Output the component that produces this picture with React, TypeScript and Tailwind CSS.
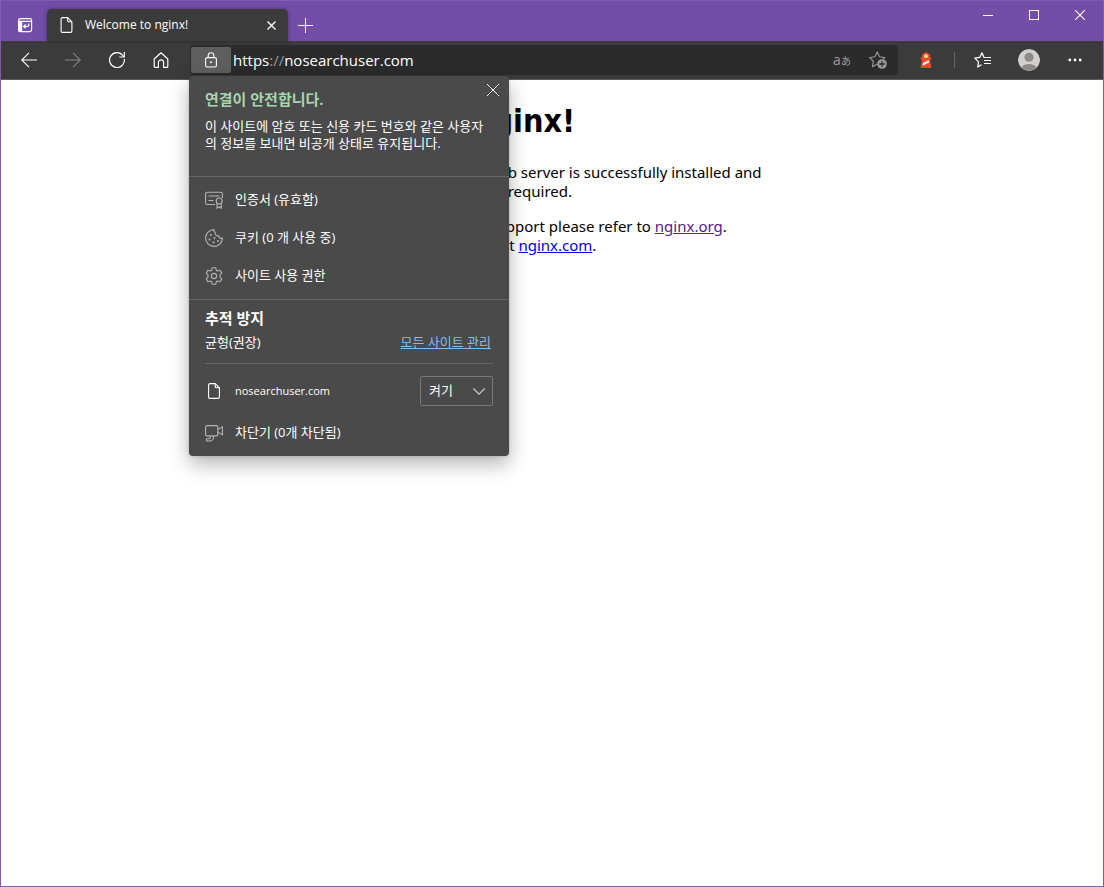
import type { ReactNode } from "react";

function BackIcon({ className = "" }: { className?: string }) {
  return (
    <svg className={`w-4 h-4 ${className}`} viewBox="0 0 16 16" fill="none" stroke="currentColor" strokeWidth="1.1">
      <path d="M16 8H.8M8 .8.8 8 8 15.2" />
    </svg>
  );
}

function PageIcon({ className = "" }: { className?: string }) {
  return (
    <svg className={className} viewBox="0 0 12 16" fill="none" stroke="currentColor" strokeWidth="1.1" strokeLinejoin="round">
      <path d="M2 .6h5.2l4.2 4.2V14a1.4 1.4 0 0 1-1.4 1.4H2A1.4 1.4 0 0 1 .6 14V2A1.4 1.4 0 0 1 2 .6Z" />
      <path d="M7.2.6v3.2a1 1 0 0 0 1 1h3.2" />
    </svg>
  );
}

function NavButton({ label, children }: { label: string; children: ReactNode }) {
  return (
    <button aria-label={label} className="w-11 h-[30px] flex items-center justify-center shrink-0">
      {children}
    </button>
  );
}

function MenuRow({ icon, label }: { icon: ReactNode; label: string }) {
  return (
    <button className="w-full h-[38px] flex items-center gap-3 text-left">
      {icon}
      <span>{label}</span>
    </button>
  );
}

function TitleBar() {
  return (
    <div className="h-10 flex bg-[#744da9]">
      <button aria-label="Tab actions" className="w-[46px] flex items-center justify-center pt-2 pl-[2px]">
        <svg className="w-4 h-4" viewBox="0 0 16 16" fill="none" stroke="currentColor" strokeWidth="1.2">
          <rect x="1.6" y="1.6" width="13" height="13" rx="1.8" />
          <path d="M1.6 4.4h13" />
          <path d="M1.6 4.4h3v10h-2a1 1 0 0 1-1-1Z" fill="currentColor" />
          <path d="M11.8 6.6v1.6q0 1.2-1.2 1.2H6.8M8.6 7.4l-2 2 2 2" />
        </svg>
      </button>
      <div className="w-[241px] h-8 self-end flex items-center bg-[#3b3b3b] rounded-t-[5px] pl-[13px] pr-2 shadow-[0_0_4px_rgba(0,0,0,0.35)]">
        <PageIcon className="w-[13px] h-4" />
        <span className="ml-3 flex-1 text-[12px] whitespace-nowrap">Welcome to nginx!</span>
        <button aria-label="Close tab" className="w-[18px] h-[18px] flex items-center justify-center">
          <svg className="w-[9px] h-[9px]" viewBox="0 0 9 9" stroke="currentColor" strokeWidth="1.3">
            <path d="M.5.5l8 8M8.5.5l-8 8" />
          </svg>
        </button>
      </div>
      <button aria-label="New tab" className="w-[35px] flex items-center justify-center pt-2">
        <svg className="w-[15px] h-[15px]" viewBox="0 0 15 15" stroke="currentColor">
          <path d="M7.5 0v15M0 7.5h15" />
        </svg>
      </button>
      <div className="ml-auto h-7 flex">
        <button aria-label="Minimize" className="w-[46px] flex items-center justify-center">
          <svg className="w-[10px] h-[10px]" viewBox="0 0 10 10" stroke="currentColor">
            <path d="M0 5.5h10" />
          </svg>
        </button>
        <button aria-label="Maximize" className="w-[46px] flex items-center justify-center">
          <svg className="w-[10px] h-[10px]" viewBox="0 0 10 10" fill="none" stroke="currentColor">
            <rect x=".5" y=".5" width="9" height="9" />
          </svg>
        </button>
        <button aria-label="Close" className="w-[46px] flex items-center justify-center">
          <svg className="w-[10px] h-[10px]" viewBox="0 0 10 10" stroke="currentColor" strokeWidth="1.1">
            <path d="M0 0l10 10M10 0L0 10" />
          </svg>
        </button>
      </div>
    </div>
  );
}

function SiteInfo() {
  return (
    <div
      role="dialog"
      aria-labelledby="site-info-title"
      className="absolute -left-px top-[31px] z-10 w-80 rounded-[4px] bg-[#4a4a4a] text-[13px] text-white shadow-[0_8px_20px_rgba(0,0,0,0.3),0_0_3px_rgba(0,0,0,0.2)]"
    >
      <div className="pt-3 px-4 pb-6 border-b border-[#666]">
        <h2 id="site-info-title" className="text-[15px] leading-[22px] font-bold text-[#a5d6b0]">
          연결이 안전합니다.
        </h2>
        <p className="mt-2 leading-[17px]">
          이 사이트에 암호 또는 신용 카드 번호와 같은 사용자의 정보를 보내면 비공개 상태로 유지됩니다.
        </p>
        <button aria-label="닫기" className="absolute right-2 top-1 w-4 h-5 flex items-center justify-center">
          <svg className="w-3 h-3 shrink-0" viewBox="0 0 12 12" stroke="currentColor">
            <path d="M0 0l12 12M12 0L0 12" />
          </svg>
        </button>
      </div>

      <div className="py-1 px-4 border-b border-[#666]">
        <MenuRow
          label="인증서 (유효함)"
          icon={
            <svg className="w-[18px] h-[18px] text-[#b5b5b5]" viewBox="0 0 18 18" fill="none" stroke="currentColor" strokeWidth="1.1">
              <path d="M10 13.5H2.4A1.8 1.8 0 0 1 .6 11.7V3A1.8 1.8 0 0 1 2.4 1.2h13.2A1.8 1.8 0 0 1 17.4 3v4" />
              <path d="M3.5 5h11M3.5 9.5h5" />
              <circle cx="14.2" cy="10" r="3" />
              <path d="M12 12.3v4.9l2.2-1.5 2.2 1.5v-4.9" />
            </svg>
          }
        />
        <MenuRow
          label="쿠키 (0 개 사용 중)"
          icon={
            <svg className="w-[18px] h-[18px] text-[#b5b5b5]" viewBox="0 0 18 18" fill="none" stroke="currentColor" strokeWidth="1.1">
              <path d="M9 .6a8.4 8.4 0 1 0 8.4 8.6 2.7 2.7 0 0 1-3.7-2.3 3 3 0 0 1-3.6-3.5A2.8 2.8 0 0 1 9 .6Z" />
              <g fill="currentColor" stroke="none">
                <circle cx="6" cy="6" r="1" />
                <circle cx="4.5" cy="10.5" r="1" />
                <circle cx="9.5" cy="9" r="1" />
                <circle cx="8.5" cy="13.5" r="1" />
                <circle cx="13" cy="12" r="1" />
              </g>
            </svg>
          }
        />
        <MenuRow
          label="사이트 사용 권한"
          icon={
            <svg className="w-[18px] h-[18px] text-[#b5b5b5]" viewBox="0 0 18 18" fill="none" stroke="currentColor" strokeWidth="1.1" strokeLinejoin="round">
              <path d="M7.3.7h3.4l.6 2.5 1.3.8 2.5-.8 1.7 2.9L15 7.9v2.2l1.8 1.8-1.7 2.9-2.5-.8-1.3.8-.6 2.5H7.3l-.6-2.5-1.3-.8-2.5.8-1.7-2.9L3 10.1V7.9L1.2 6.1l1.7-2.9 2.5.8 1.3-.8Z" />
              <circle cx="9" cy="9" r="2.6" />
            </svg>
          }
        />
      </div>

      <div className="pt-2 px-4 pb-1">
        <h3 className="text-[15px] leading-5 font-bold">추적 방지</h3>
        <div className="mt-1 mb-[11px] flex justify-between leading-5">
          <span>균형(권장)</span>
          <a href="#sites" className="mr-[2px] text-[#80bdf0] underline">
            모든 사이트 관리
          </a>
        </div>
        <div className="pt-3 flex items-center border-t border-[#666]">
          <PageIcon className="w-3 h-4 mx-[3px]" />
          <label htmlFor="tracking" className="ml-3 flex-1 text-[11px]">
            nosearchuser.com
          </label>
          <div className="relative">
            <select
              id="tracking"
              className="block w-[73px] h-[30px] pl-2 appearance-none rounded-[2px] border border-[#777] bg-transparent text-[13px]"
            >
              <option>켜기</option>
            </select>
            <svg
              className="absolute right-2 top-3 w-3 h-[7px] pointer-events-none text-[#d0d0d0]"
              viewBox="0 0 12 7"
              fill="none"
              stroke="currentColor"
              strokeWidth="1.1"
            >
              <path d="M.4.5 6 6.1 11.6.5" />
            </svg>
          </div>
        </div>
        <div className="pt-2">
          <MenuRow
            label="차단기 (0개 차단됨)"
            icon={
              <svg className="w-[18px] h-[18px] text-[#b5b5b5]" viewBox="0 0 18 18" fill="none" stroke="currentColor" strokeWidth="1.1" strokeLinejoin="round">
                <path d="M2 1.6h9.4a1.4 1.4 0 0 1 1.4 1.4v7.5a1.4 1.4 0 0 1-1.4 1.4H2A1.4 1.4 0 0 1 .6 10.5V3A1.4 1.4 0 0 1 2 1.6Z" />
                <path d="M12.8 5.6 17.4 2.6v8.3l-4.6-3" />
                <path d="M8.5 12v1.2a3.8 3.8 0 0 1-3.8 3.8H1.5v-2.3h2.3a1.5 1.5 0 0 0 1.5-1.5V12" />
              </svg>
            }
          />
        </div>
      </div>
    </div>
  );
}

function AddressBar() {
  return (
    <div className="relative ml-[7px] flex-1 h-[30px] flex items-center rounded-[3px] bg-[#2b2b2b] pl-px pr-[2px]">
      <button aria-label="사이트 정보" className="w-10 h-[26px] flex items-center justify-center rounded-[2px] bg-[#5e5e5e]">
        <svg className="w-3 h-4" viewBox="0 0 12 16" fill="none" stroke="currentColor" strokeWidth="1.1">
          <rect x=".6" y="5.6" width="10.8" height="9.4" rx="1.6" />
          <path d="M3.2 5.6V3.5a2.8 2.8 0 0 1 5.6 0v2.1" />
          <circle cx="6" cy="10.3" r="1" fill="currentColor" stroke="none" />
        </svg>
      </button>
      <div className="ml-[2px] flex-1 text-[15px] leading-5 whitespace-nowrap">
        https<span className="text-[#9a9a9a]">://</span>nosearchuser.com
      </div>
      <button aria-label="번역" className="w-9 text-[14px] leading-5 text-[#9a9a9a]">
        a<span className="text-[10px]">あ</span>
      </button>
      <button aria-label="즐겨찾기에 추가" className="w-9 flex items-center justify-center">
        <svg className="w-[18px] h-[18px] text-[#9a9a9a]" viewBox="0 0 18 18" fill="none" stroke="currentColor" strokeWidth="1.1" strokeLinejoin="round">
          <path d="M8.2 13 3.5 15.7l.9-5.4L.7 6.5l5.2-.8L8.2 1l2.3 4.7 5.2.8-1.7 1.7" />
          <circle cx="13" cy="13" r="4.8" fill="currentColor" stroke="none" />
          <path d="M13 10.2v5.6M10.2 13h5.6" stroke="#2b2b2b" strokeWidth="1.3" />
        </svg>
      </button>
      <SiteInfo />
    </div>
  );
}

function Toolbar() {
  return (
    <div className="h-[39px] px-[6px] flex items-center bg-[#3b3b3b] border-b border-[#5c5c5c]">
      <NavButton label="Back">
        <BackIcon />
      </NavButton>
      <NavButton label="Forward">
        <BackIcon className="rotate-180 text-[#858585]" />
      </NavButton>
      <NavButton label="Reload">
        <svg className="w-4 h-4" viewBox="0 0 16 16" fill="none" stroke="currentColor" strokeWidth="1.2">
          <path d="M15.3 7A7.4 7.4 0 1 1 13.8 3.5L15 5" />
          <path d="M15.3 0v5h-5" />
        </svg>
      </NavButton>
      <NavButton label="Home">
        <svg className="w-4 h-4" viewBox="0 0 16 16" fill="none" stroke="currentColor" strokeWidth="1.2" strokeLinejoin="round">
          <path d="M1.2 7 8 .8 14.8 7v7.4a1 1 0 0 1-1 1h-3.2V10.5a2.6 2.6 0 0 0-5.2 0v4.9H2.2a1 1 0 0 1-1-1Z" />
        </svg>
      </NavButton>
      <AddressBar />
      <div className="ml-[6px] flex items-center">
        <NavButton label="Lighthouse">
          <svg className="w-3 h-4" viewBox="0 0 12 16">
            <path d="M6 0 10 2.6V5.5h1.2v2.2H10L11.5 16H.5L2 7.7H.8V5.5H2V2.6Z" fill="#f0482b" />
            <circle cx="6" cy="4.2" r="1.9" fill="#fbe77e" />
            <path d="M3 11 8.7 8.2l.4 2.3-6.5 3.3Z" fill="#fff" />
          </svg>
        </NavButton>
        <div className="mx-[6px] w-px h-4 bg-[#666]" />
        <NavButton label="Favorites">
          <svg className="w-[18px] h-4" viewBox="0 0 18 16" fill="none" stroke="currentColor" strokeWidth="1.2" strokeLinejoin="round">
            <path d="m7.5 12.8-3.8 2.3.8-5.2L.8 6.2l4.9-.8L8 .8l2 4.700H17M10 8.500H17M10 11.500H17" />
          </svg>
        </NavButton>
        <div className="w-[2px]" />
        <NavButton label="Profile">
          <svg className="w-[22px] h-[22px] rounded-full" viewBox="0 0 23 23">
            <circle cx="11.5" cy="11.5" r="11.5" fill="#d2d0ce" />
            <circle cx="11.5" cy="8.6" r="4.8" fill="#8f8b88" />
            <path d="M3.6 19.8a8.2 5.6 0 0 1 15.8 0A11.5 11.5 0 0 1 3.6 19.8Z" fill="#8f8b88" />
          </svg>
        </NavButton>
        <div className="w-[2px]" />
        <NavButton label="Settings and more">
          <svg className="w-[14px] h-1" viewBox="0 0 14 4" fill="currentColor">
            <circle cx="1.8" cy="2" r="1.4" />
            <circle cx="7" cy="2" r="1.4" />
            <circle cx="12.2" cy="2" r="1.4" />
          </svg>
        </NavButton>
      </div>
    </div>
  );
}

export default function App() {
  return (
    <div className="min-h-screen border border-[#805bb1] bg-white font-['Open_Sans','Noto_Sans_CJK_KR',sans-serif]">
      <header className="text-white">
        <TitleBar />
        <Toolbar />
      </header>

      <main className="max-w-[560px] mx-auto pt-[22px] text-black text-[15px] leading-[19px] font-['Noto_Sans',sans-serif]">
        <h1 className="mb-[22px] text-[32px] leading-[39px] font-bold font-['DejaVu_Sans_Condensed','DejaVu_Sans',sans-serif]">
          Welcome to nginx!
        </h1>
        <p className="mb-4">
          If you see this page, the nginx web server is successfully installed and
          <br />
          working. Further configuration is required.
        </p>
        <p className="mb-4">
          For online documentation and support please refer to{" "}
          <a href="http://nginx.org/" className="text-[#551a8b] underline">nginx.org</a>.
          <br />
          Commercial support is available at{" "}
          <a href="http://nginx.com/" className="text-[#0000ee] underline">nginx.com</a>.
        </p>
      </main>
    </div>
  );
}
